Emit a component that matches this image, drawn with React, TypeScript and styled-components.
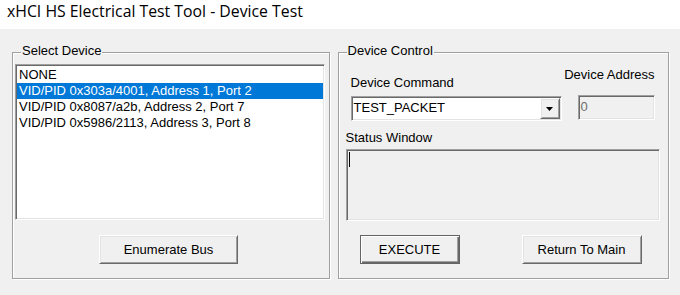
import React, { FC } from "react";
import styled, { createGlobalStyle, css } from "styled-components";

const GlobalStyle = createGlobalStyle`
  html, body {
    margin: 0;
    padding: 0;
    background: #f0f0f0;
  }
  body {
    font-family: "Liberation Sans", Arial, sans-serif;
    font-size: 13px;
    color: #000;
  }
`;

const sunken = css`
  box-sizing: border-box;
  border: 1px solid;
  border-color: #a0a0a0 #ffffff #ffffff #a0a0a0;
  box-shadow: inset 1px 1px 0 #696969, inset -1px -1px 0 #e3e3e3;
`;

const raised = css`
  box-sizing: border-box;
  border: 1px solid;
  border-color: #ffffff #696969 #696969 #ffffff;
  box-shadow: inset 1px 1px 0 #e3e3e3, inset -1px -1px 0 #a0a0a0;
`;

const Window = styled.div`
  width: 680px;
  height: 295px;
  background: #f0f0f0;
  overflow: hidden;
`;

const TitleBar = styled.div`
  box-sizing: border-box;
  height: 29px;
  background: #fff;
  padding: 0 0 0 7px;
  font-family: "Open Sans", "Noto Sans", sans-serif;
  font-size: 15.8px;
  line-height: 22px;
  color: #000;
  white-space: nowrap;
`;

const Body = styled.div`
  display: flex;
  gap: 8px;
  padding: 23px 11px 0 12px;
`;

const GroupBox = styled.div<{ $width: number }>`
  box-sizing: border-box;
  width: ${(p) => p.$width}px;
  height: 227px;
  border: 1px solid #a0a0a0;
  box-shadow: inset 1px 1px 0 #fff, 1px 1px 0 #fff;
  display: flex;
  flex-direction: column;
  align-items: flex-start;
`;

const Legend = styled.div`
  margin: -9px 0 0 8px;
  padding: 0 1px;
  line-height: 14px;
  background: #f0f0f0;
  white-space: nowrap;
`;

const ListBox = styled.div`
  ${sunken};
  width: 310px;
  height: 156px;
  margin: 6px 0 0 2px;
  padding: 2px 1px 0 1px;
  background: #fff;
`;

const ListItem = styled.div<{ $selected?: boolean }>`
  height: 16px;
  line-height: 16px;
  padding-left: 2px;
  white-space: nowrap;
  background: ${(p) => (p.$selected ? "#0078d7" : "transparent")};
  color: ${(p) => (p.$selected ? "#fff" : "#000")};
`;

const ButtonBar = styled.div<{ $top: number; $left: number; $gap?: number }>`
  display: flex;
  gap: ${(p) => p.$gap || 0}px;
  margin: ${(p) => p.$top}px 0 0 ${(p) => p.$left}px;
`;

const Button = styled.button<{ $width: number; $default?: boolean }>`
  ${raised};
  width: ${(p) => p.$width}px;
  height: 29px;
  padding: 0;
  background: #f0f0f0;
  font-family: "Liberation Sans", Arial, sans-serif;
  font-size: 13px;
  color: #000;
  ${(p) =>
    p.$default &&
    css`
      border-color: #646464;
      box-shadow: inset 1px 1px 0 #fff, inset -1px -1px 0 #696969,
        inset -2px -2px 0 #a0a0a0;
    `}
`;

const ControlRow = styled.div`
  display: flex;
  align-items: flex-start;
  gap: 16px;
  margin-left: 12px;
`;

const Column = styled.div<{ $width: number }>`
  display: flex;
  flex-direction: column;
  width: ${(p) => p.$width}px;
`;

const Label = styled.div<{ $top: number; $left?: number; $right?: boolean }>`
  line-height: 16px;
  margin: ${(p) => p.$top}px 0 0 ${(p) => p.$left || 0}px;
  align-self: ${(p) => (p.$right ? "flex-end" : "flex-start")};
  white-space: nowrap;
`;

const Combo = styled.div`
  ${sunken};
  display: flex;
  align-items: center;
  height: 25px;
  margin-top: 5px;
  padding: 0 1px 0 1px;
  background: #fff;
`;

const ComboText = styled.div`
  flex: 1;
  line-height: 16px;
  padding: 0 0 1px 1px;
`;

const ComboArrow = styled.div`
  ${raised};
  display: flex;
  align-items: center;
  justify-content: center;
  width: 20px;
  height: 21px;
  background: #f0f0f0;
`;

const AddressInput = styled.div`
  ${sunken};
  height: 25px;
  margin-top: 12px;
  padding-left: 2px;
  line-height: 21px;
  background: #f0f0f0;
  color: #6d6d6d;
`;

const StatusBox = styled.div`
  ${sunken};
  width: 314px;
  height: 72px;
  margin: 3px 0 0 7px;
  padding: 2px 0 0 2px;
  background: #f0f0f0;
`;

const Caret = styled.div`
  width: 1px;
  height: 15px;
  background: #000;
`;

const devices = [
  "NONE",
  "VID/PID 0x303a/4001, Address 1, Port 2",
  "VID/PID 0x8087/a2b, Address 2, Port 7",
  "VID/PID 0x5986/2113, Address 3, Port 8",
];

const App: FC = () => (
  <Window>
    <GlobalStyle />
    <TitleBar>xHCI HS Electrical Test Tool - Device Test</TitleBar>
    <Body>
      <GroupBox $width={318}>
        <Legend>Select Device</Legend>
        <ListBox>
          {devices.map((d, i) => (
            <ListItem key={i} $selected={i === 1}>
              {d}
            </ListItem>
          ))}
        </ListBox>
        <ButtonBar $top={15} $left={86}>
          <Button $width={139}>Enumerate Bus</Button>
        </ButtonBar>
      </GroupBox>
      <GroupBox $width={332}>
        <Legend>Device Control</Legend>
        <ControlRow>
          <Column $width={211}>
            <Label $top={17}>Device Command</Label>
            <Combo>
              <ComboText>TEST_PACKET</ComboText>
              <ComboArrow>
                <svg width="7" height="4" viewBox="0 0 7 4">
                  <polygon points="0,0 7,0 3.5,4" fill="#000" />
                </svg>
              </ComboArrow>
            </Combo>
          </Column>
          <Column $width={77}>
            <Label $top={9} $right>
              Device Address
            </Label>
            <AddressInput>0</AddressInput>
          </Column>
        </ControlRow>
        <Label $top={9} $left={7}>
          Status Window
        </Label>
        <StatusBox>
          <Caret />
        </StatusBox>
        <ButtonBar $top={14} $left={21} $gap={62}>
          <Button $width={100} $default>
            EXECUTE
          </Button>
          <Button $width={120}>Return To Main</Button>
        </ButtonBar>
      </GroupBox>
    </Body>
  </Window>
);

export default App;
